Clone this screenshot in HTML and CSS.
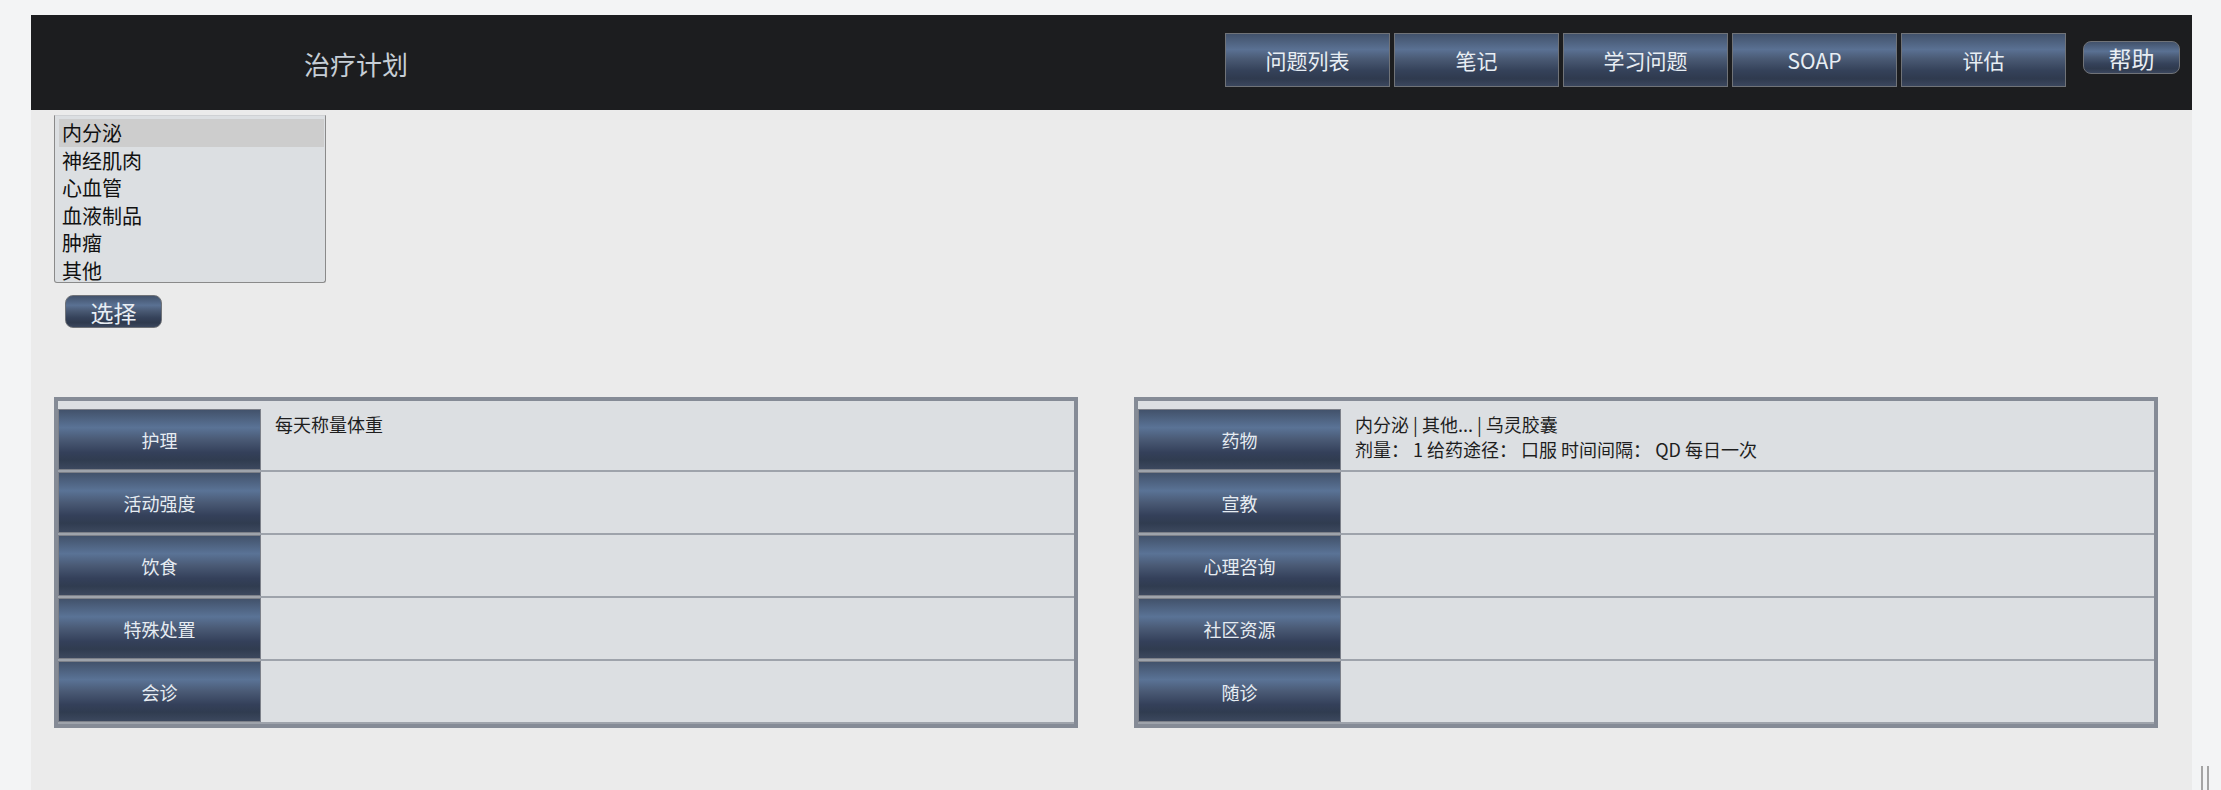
FILE: index.html
```html
<!doctype html>
<html>
<head>
    <meta charset="UTF-8">
    <link rel="stylesheet" href="styles.css">
</head>
<body>
    <div class="page">
        <header class="topbar">
            <div class="brand">治疗计划</div>
            <nav class="tabs">
                <button class="tab">问题列表</button>
                <button class="tab">笔记</button>
                <button class="tab">学习问题</button>
                <button class="tab">SOAP</button>
                <button class="tab">评估</button>
            </nav>
            <button class="btn-small btn-help">帮助</button>
        </header>
        <main class="content">
            <ul class="category-list">
                <li class="selected">内分泌</li>
                <li>神经肌肉</li>
                <li>心血管</li>
                <li>血液制品</li>
                <li>肿瘤</li>
                <li>其他</li>
            </ul>
            <button class="btn-small btn-select">选择</button>

            <div class="plans">
                <div class="plan">
                    <div class="plan-row">
                        <div class="plan-label">护理</div>
                        <div class="plan-value">每天称量体重</div>
                    </div>
                    <div class="plan-row">
                        <div class="plan-label">活动强度</div>
                        <div class="plan-value"></div>
                    </div>
                    <div class="plan-row">
                        <div class="plan-label">饮食</div>
                        <div class="plan-value"></div>
                    </div>
                    <div class="plan-row">
                        <div class="plan-label">特殊处置</div>
                        <div class="plan-value"></div>
                    </div>
                    <div class="plan-row">
                        <div class="plan-label">会诊</div>
                        <div class="plan-value"></div>
                    </div>
                </div>
                <div class="plan">
                    <div class="plan-row">
                        <div class="plan-label">药物</div>
                        <div class="plan-value">内分泌 | 其他... | 乌灵胶囊<br>剂量： 1 给药途径： 口服 时间间隔： QD 每日一次</div>
                    </div>
                    <div class="plan-row">
                        <div class="plan-label">宣教</div>
                        <div class="plan-value"></div>
                    </div>
                    <div class="plan-row">
                        <div class="plan-label">心理咨询</div>
                        <div class="plan-value"></div>
                    </div>
                    <div class="plan-row">
                        <div class="plan-label">社区资源</div>
                        <div class="plan-value"></div>
                    </div>
                    <div class="plan-row">
                        <div class="plan-label">随诊</div>
                        <div class="plan-value"></div>
                    </div>
                </div>
            </div>
        </main>
    </div>
    <div class="grip"></div>
</body>
</html>
```

FILE: styles.css
```css
* {
    box-sizing: border-box;
}
body {
    margin: 0;
    background-color: #f3f4f5;
    font-family: "Noto Sans CJK SC", "Noto Sans", sans-serif;
    overflow: hidden;
}

.page {
    width: 2161px;
    margin: 15px 0 0 31px;
    min-height: 775px;
    background-color: #ebebeb;
}

/* barra superior */
.topbar {
    height: 95px;
    background-color: #1c1d1f;
    display: flex;
    align-items: flex-start;
    padding-right: 12px;
}
.brand {
    width: 650px;
    text-align: center;
    color: #c6ced6;
    font-size: 26px;
    line-height: 36px;
    padding-top: 31px;
}
.tabs {
    display: flex;
    gap: 4px;
    margin-left: auto;
    margin-top: 18px;
}
.tab, .btn-small {
    font-family: inherit;
    color: #e8eef4;
    border: 1px solid #707378;
    background: linear-gradient(to bottom, #42526b 0%, #5a7193 30%, #4a5a74 48%, #35425a 70%, #2f3a4e 86%, #3b475e 100%);
    cursor: pointer;
    padding: 0;
}
.tab {
    width: 165px;
    height: 54px;
    font-size: 21px;
}
.btn-small {
    width: 97px;
    height: 33px;
    font-size: 23px;
    line-height: 30px;
    border-radius: 8px;
}
.btn-help {
    margin: 26px 0 0 17px;
}

/* conteudo */
.content {
    padding: 5px 0 0 23px;
}
.category-list {
    list-style: none;
    margin: 0;
    width: 272px;
    height: 168px;
    overflow: hidden;
    padding: 3px 1px 0 4px;
    background-color: #dcdfe2;
    border: 1px solid #8a8a8a;
    border-top-color: #cfd1d4;
    border-radius: 0 0 3px 3px;
    font-size: 20px;
    color: #111;
}
.category-list li {
    height: 27.5px;
    line-height: 27px;
    padding-left: 3px;
}
.category-list li.selected {
    background-color: #cdcdcd;
}
.btn-select {
    display: block;
    margin: 12px 0 0 11px;
}

.plans {
    display: flex;
    gap: 56px;
    margin-top: 69px;
}
.plan {
    width: 1024px;
    border: 4px solid #858b96;
    padding-top: 8px;
    background-color: #dcdfe2;
}
.plan-row {
    display: flex;
    height: 63px;
    border-bottom: 2px solid #9ea3ab;
}
.plan-label {
    width: 203px;
    flex-shrink: 0;
    display: flex;
    align-items: center;
    justify-content: center;
    border: 1px solid #7c8089;
    background: linear-gradient(to bottom, #42526b 0%, #5a7396 30%, #4a5a75 50%, #34405a 72%, #303c50 85%, #3c485e 100%);
    color: #e6ecf2;
    font-size: 18px;
}
.plan-value {
    flex: 1;
    padding: 3px 14px;
    font-size: 18px;
    line-height: 25px;
    color: #1e1e1e;
}

/* alça de redimensionamento no canto */
.grip {
    position: fixed;
    right: 12px;
    bottom: 0;
    width: 8px;
    height: 24px;
    border-left: 2px solid #a4a4a4;
    border-right: 2px solid #a4a4a4;
}
```
